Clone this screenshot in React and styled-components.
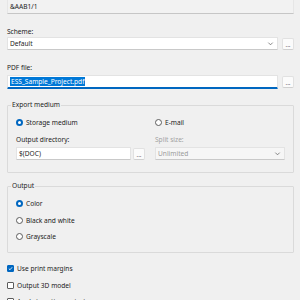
import React from 'react';
import styled, { createGlobalStyle } from 'styled-components';

const Global = createGlobalStyle`
  html, body {
    margin: 0;
    padding: 0;
    background: #f0f0f0;
  }
  body {
    font-family: "Noto Sans", "Open Sans", sans-serif;
    font-size: 6.6px;
    color: #222;
    overflow: hidden;
  }
`;

const Page = styled.div`
  width: 300px;
  height: 300px;
  overflow: hidden;
  padding: 0 6px 0 7px;
  box-sizing: border-box;
`;

const ReadOnly = styled.div`
  height: 14px;
  box-sizing: border-box;
  border: 1px solid #e6e6e6;
  border-bottom: 1px solid #c6c6c6;
  border-top: none;
  background: #f2f2f2;
  padding-left: 2px;
  display: flex;
  align-items: center;
`;

const Label = styled.div`
  margin-top: ${p => p.$top || 0}px;
  height: 10px;
  line-height: 10px;
  color: ${p => (p.$disabled ? '#a2a2a2' : '#222')};
`;

const Row = styled.div`
  display: flex;
  align-items: center;
  gap: ${p => p.$gap || 4}px;
  margin-top: ${p => p.$top || 0}px;
`;

const Field = styled.div`
  flex: 1;
  height: ${p => p.$h || 13}px;
  box-sizing: border-box;
  background: ${p => (p.$disabled ? '#f6f6f6' : '#fff')};
  border: 1px solid #e3e3e3;
  border-bottom: ${p => (p.$focus ? '2px solid #0067c0' : '1px solid #c9c9c9')};
  border-radius: 1px;
  padding-left: 2px;
  display: flex;
  align-items: center;
  justify-content: space-between;
  color: ${p => (p.$disabled ? '#9a9a9a' : '#222')};
`;

const Selected = styled.span`
  background: #0078d7;
  color: #fff;
  padding: 0 1px;
  line-height: 9px;
`;

const Chevron = styled.svg`
  width: 7px;
  height: 7px;
  margin-right: 3px;
`;

const Dots = styled.button`
  width: 12px;
  height: 12px;
  padding: 0;
  box-sizing: border-box;
  background: #fbfbfb;
  border: 1px solid #e1e1e1;
  border-bottom-color: #cfcfcf;
  border-radius: 2px;
  font: inherit;
  font-size: 6px;
  color: #333;
  line-height: 8px;
  display: flex;
  align-items: flex-end;
  justify-content: center;
`;

const Group = styled.fieldset`
  margin: ${p => p.$top}px 0 0 0;
  padding: 4px 8px 0 8px;
  height: ${p => p.$h}px;
  box-sizing: border-box;
  border: 1px solid #dadada;
  border-radius: 1px;
`;

const Legend = styled.legend`
  padding: 0 1px;
  margin-left: -5px;
  line-height: 8px;
`;

const Columns = styled.div`
  display: grid;
  grid-template-columns: 129px 130px;
  column-gap: 10px;
`;

const Option = styled.label`
  display: flex;
  align-items: center;
  gap: 3px;
  height: 10px;
  margin-top: ${p => p.$top || 0}px;
`;

const Radio = styled.span`
  width: 7px;
  height: 7px;
  box-sizing: border-box;
  border-radius: 50%;
  border: ${p => (p.$on ? '2px solid #0067c0' : '1px solid #5c5c5c')};
  background: #fff;
  flex: none;
`;

const Box = styled.span`
  width: 7px;
  height: 7px;
  box-sizing: border-box;
  border-radius: 1px;
  border: 1px solid ${p => (p.$on ? '#0067c0' : '#5c5c5c')};
  background: ${p => (p.$on ? '#0067c0' : '#fff')};
  flex: none;
  display: flex;
  align-items: center;
  justify-content: center;
`;

const Down = () => (
  <Chevron viewBox="0 0 8 8">
    <path d="M1.5 3 L4 5.5 L6.5 3" fill="none" stroke="#666" strokeWidth="0.9" />
  </Chevron>
);

const Check = () => (
  <svg width="5" height="5" viewBox="0 0 6 6">
    <path d="M1 3.2 L2.4 4.5 L5 1.5" fill="none" stroke="#fff" strokeWidth="1" />
  </svg>
);

export default function App() {
  return (
    <Page>
      <Global />
      <ReadOnly>&amp;AAB1/1</ReadOnly>

      <Label $top={13}>Scheme:</Label>
      <Row $gap={4}>
        <Field>
          Default
          <Down />
        </Field>
        <Dots>...</Dots>
      </Row>

      <Label $top={13}>PDF file:</Label>
      <Row $gap={4} $top={2}>
        <Field $h={14} $focus>
          <Selected>ESS_Sample_Project.pdf</Selected>
        </Field>
        <Dots>...</Dots>
      </Row>

      <Group $top={12} $h={72}>
        <Legend>Export medium</Legend>
        <Columns>
          <div>
            <Option $top={4}>
              <Radio $on />
              Storage medium
            </Option>
            <Label $top={8}>Output directory:</Label>
            <Row $gap={2} $top={2}>
              <Field>$(DOC)</Field>
              <Dots>...</Dots>
            </Row>
          </div>
          <div>
            <Option $top={4}>
              <Radio />
              E-mail
            </Option>
            <Label $top={8} $disabled>Split size:</Label>
            <Row $top={2}>
              <Field $disabled>
                Unlimited
                <Down />
              </Field>
            </Row>
          </div>
        </Columns>
      </Group>

      <Group $top={9} $h={71}>
        <Legend>Output</Legend>
        <Option $top={4}>
          <Radio $on />
          Color
        </Option>
        <Option $top={7}>
          <Radio />
          Black and white
        </Option>
        <Option $top={6}>
          <Radio />
          Grayscale
        </Option>
      </Group>

      <Option $top={10}>
        <Box $on>
          <Check />
        </Box>
        Use print margins
      </Option>
      <Option $top={7}>
        <Box />
        Output 3D model
      </Option>
      <Option $top={6}>
        <Box />
        Apply to active project
      </Option>
    </Page>
  );
}
